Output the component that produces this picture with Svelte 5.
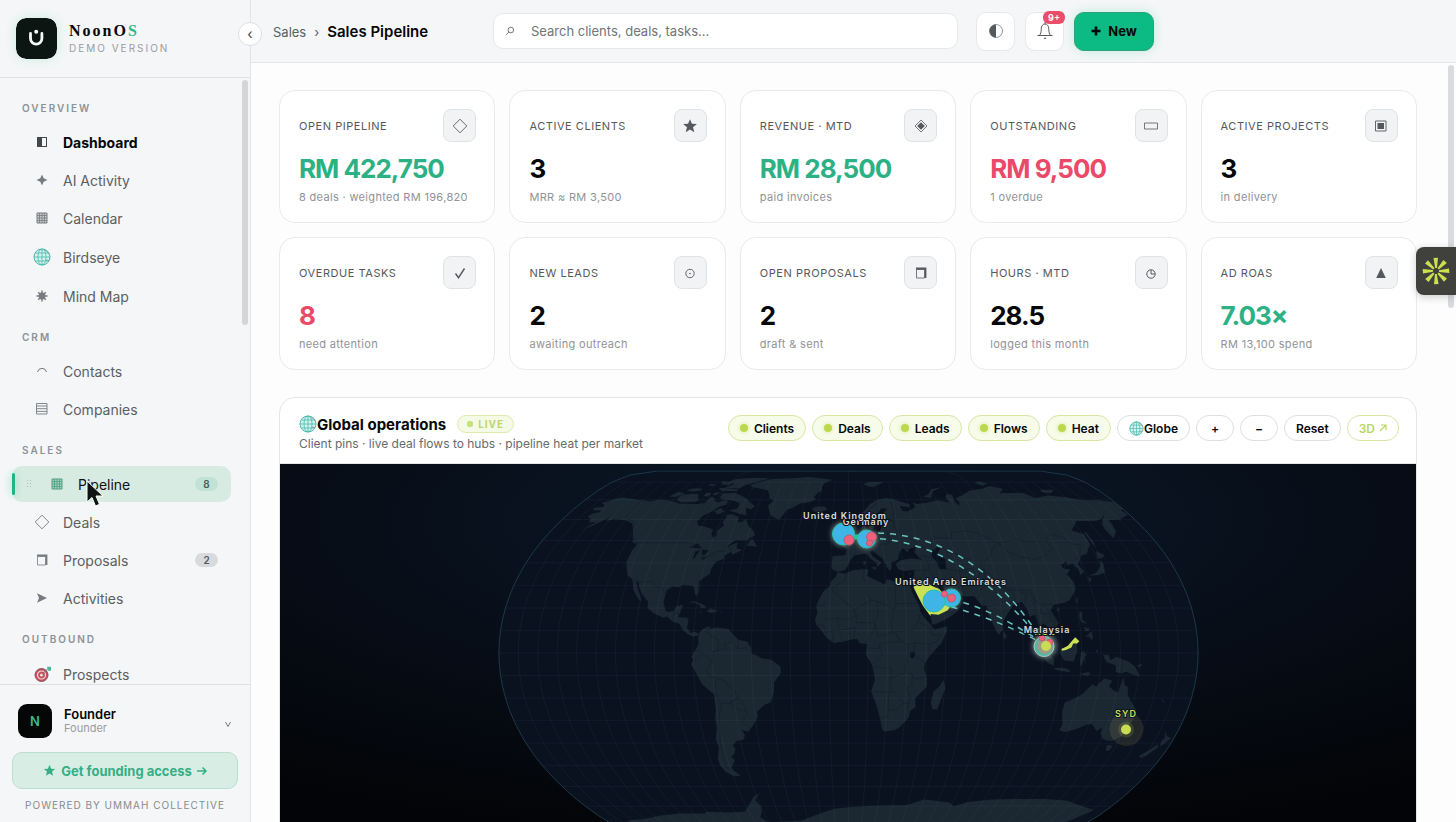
<script lang="ts">
  type Item = { label: string; icon: string; badge?: number; active?: boolean; strong?: boolean };
  type Point = [number, number];

  const nav: { title: string; items: Item[] }[] = [
    {
      title: 'Overview',
      items: [
        { label: 'Dashboard', icon: 'half', strong: true },
        { label: 'AI Activity', icon: 'spark' },
        { label: 'Calendar', icon: 'grid' },
        { label: 'Birdseye', icon: 'globe' },
        { label: 'Mind Map', icon: 'burst' }
      ]
    },
    {
      title: 'CRM',
      items: [
        { label: 'Contacts', icon: 'arc' },
        { label: 'Companies', icon: 'rows' }
      ]
    },
    {
      title: 'Sales',
      items: [
        { label: 'Pipeline', icon: 'grid', badge: 8, active: true },
        { label: 'Deals', icon: 'diamond' },
        { label: 'Proposals', icon: 'box', badge: 2 },
        { label: 'Activities', icon: 'arrow' }
      ]
    },
    { title: 'Outbound', items: [{ label: 'Prospects', icon: 'target' }] }
  ];

  const cards = [
    { label: 'Open pipeline', value: 'RM 422,750', note: '8 deals · weighted RM 196,820', icon: 'diamond', tone: 'good' },
    { label: 'Active clients', value: '3', note: 'MRR ≈ RM 3,500', icon: 'star', tone: '' },
    { label: 'Revenue · MTD', value: 'RM 28,500', note: 'paid invoices', icon: 'gem', tone: 'good' },
    { label: 'Outstanding', value: 'RM 9,500', note: '1 overdue', icon: 'bar', tone: 'bad' },
    { label: 'Active projects', value: '3', note: 'in delivery', icon: 'square', tone: '' },
    { label: 'Overdue tasks', value: '8', note: 'need attention', icon: 'check', tone: 'bad' },
    { label: 'New leads', value: '2', note: 'awaiting outreach', icon: 'dot', tone: '' },
    { label: 'Open proposals', value: '2', note: 'draft & sent', icon: 'box', tone: '' },
    { label: 'Hours · MTD', value: '28.5', note: 'logged this month', icon: 'clock', tone: '' },
    { label: 'Ad ROAS', value: '7.03×', note: 'RM 13,100 spend', icon: 'triangle', tone: 'good' }
  ];

  let layers = $state([
    { name: 'Clients', on: true },
    { name: 'Deals', on: true },
    { name: 'Leads', on: true },
    { name: 'Flows', on: true },
    { name: 'Heat', on: true }
  ]);
  let query = $state('');

  // Natural Earth projection, centred in the map's viewBox
  const SCALE = 127.8;
  const CX = 568.5;
  const CY = 189;

  function project(lon: number, lat: number): Point {
    const l = (lon * Math.PI) / 180;
    const p = (lat * Math.PI) / 180;
    const p2 = p * p;
    const p4 = p2 * p2;
    const x = l * (0.8707 - 0.131979 * p2 + p4 * (-0.013791 + p4 * (0.003971 * p2 - 0.001529 * p4)));
    const y = p * (1.007226 + p2 * (0.015085 + p4 * (-0.044475 + 0.028874 * p2 - 0.005916 * p4)));
    return [CX + x * SCALE, CY - y * SCALE];
  }

  // "lon,lat lon,lat ..." -> svg path
  function trace(shape: string, close = true) {
    const pts = shape.trim().split(/\s+/).map((s) => {
      const [lon, lat] = s.split(',').map(Number);
      return project(lon, lat).map((n) => n.toFixed(1)).join(' ');
    });
    return 'M' + pts.join('L') + (close ? 'Z' : '');
  }

  function meridian(lon: number, max: number) {
    const pts: string[] = [];
    for (let lat = -max; lat <= max; lat += 5) pts.push(`${lon},${lat}`);
    return pts.join(' ');
  }

  const graticule: string[] = [];
  for (let lon = -180; lon <= 180; lon += 10) graticule.push(trace(meridian(lon, lon % 90 ? 80 : 90), false));
  for (let lat = -80; lat <= 80; lat += 10) graticule.push(trace(`-180,${lat} 180,${lat}`, false));

  const sphere = trace(meridian(-180, 90) + ' ' + meridian(180, 90).split(' ').reverse().join(' '));

  const land = [
    // North America
    '-168,65.6 -162,66.5 -163.8,67.6 -166.5,68.4 -163,69.5 -156.8,71.3 -150,70.5 -141,69.7 -135,69.2 -128,70.2 -124,69.8 -118,69 -114,68 -108,67.9 -101,67.8 -97,68.3 -95.5,71.8 -92,71 -91.5,69.5 -88,68.5 -85,69.7 -82,69.5 -81.5,67.5 -86,66.3 -87.5,64.5 -93,62 -94.5,59 -92.5,57 -88,56.6 -82.3,55.2 -82,53 -80,51.2 -78.6,52.5 -79.5,54.6 -76.6,57.2 -78.5,58.8 -77.4,60.8 -78,62.4 -73.7,62.4 -69.6,61 -69.3,58.9 -66.5,58.8 -64.6,60.3 -61.5,57 -57.5,54.6 -55.8,52.5 -60,50.2 -66.5,50.2 -71,47 -65,49.2 -64.5,46.5 -61,45.8 -66,43.6 -67,44.8 -70.5,43.2 -70,41.8 -74,40.6 -76,37 -75.8,35.3 -81,31.8 -80.1,26.8 -80.6,25.2 -81.8,26.2 -82.8,29 -84.2,30 -89.5,30.2 -91,29.2 -94.5,29.5 -97.2,27.8 -97.6,22.5 -95.8,18.8 -94.3,18.2 -91.5,18.6 -90.4,20.8 -87,21.5 -88,18 -88.9,15.9 -84.5,15.8 -83.2,15 -83.6,11 -81.5,8.9 -79.5,9.5 -77.4,8.4 -78.3,7.5 -80.3,7.4 -83,8.3 -85.8,10.2 -87.6,12.9 -91.5,14 -94.5,16.2 -96.5,15.7 -101.8,17.7 -105.5,20 -105.6,22.5 -109.3,25.7 -112.2,28.9 -113.1,31.2 -114.7,31.7 -112.8,28.4 -111,26 -109.5,23.2 -110.3,23.3 -112.2,25 -115,28 -116,30.3 -117.2,32.6 -120.6,34.5 -122.5,37.5 -124.2,40.3 -124,46 -123,48.8 -127.5,51 -130.5,54.8 -134,58 -139.8,59.6 -144,60 -148,60.1 -151.5,59.3 -151.5,61 -154,59.3 -158,56.6 -163,54.8 -160,56 -157.5,58.7 -162,58.7 -162,60 -166,61.6 -164.5,63.1 -161,63.6 -161,64.5 -166,64.6',
    '-117,72.8 -106,73.2 -102,69.5 -105,68.7 -113.5,68.7 -116.5,69.5 -118,71',
    '-125,71.8 -121,74.3 -115.5,73.3 -120,71.5',
    '-89,73.5 -80.5,73.6 -76,72.5 -71,71 -67,69 -62,66.6 -64,65 -67.5,66 -66,63.2 -65,62 -71,63 -78,64.5 -73,65.5 -73,68 -79,69.8 -85,70 -89,71',
    '-90,76.4 -80,76.2 -77,78 -70,80 -62,82.4 -75,83 -88,82 -91,80 -86,79',
    '-95,76.6 -88,76.3 -80,75.6 -80,74.7 -91,74.7',
    '-117,75.3 -112,76.3 -106,76 -106,75 -112,74.5',
    '-97,80.5 -88,80 -89,78.3 -95,78.5',
    '-101,73.6 -97,73.8 -97,71.6 -101,72',
    '-95,74 -90.5,73.9 -93,72.3 -95.5,72.8',
    '-104,79 -99,78.5 -99,77.8 -104,78',
    '-87,64 -84,65.8 -80.5,64 -83.5,62.5',
    '-59.3,47.8 -57,51 -55.5,49.8 -52.9,47.2',
    '-128,50.6 -125,50 -123.5,48.4 -126,49.3',
    '-84.8,21.9 -82,23.1 -77,21.8 -74.3,20.2 -77.5,19.9 -78.5,21.4 -82,22.5',
    '-74.3,18.4 -72.5,19.9 -68.4,18.6 -71.5,17.8',
    '-78.3,18.4 -76.3,18.1 -77.5,17.8',
    '-67.2,18.5 -65.6,18.3 -67,18',
    // Greenland, Iceland
    '-73,78.2 -66,80.5 -60,82 -45,82.6 -32,83.5 -20,82.5 -12.5,81.5 -18,79.5 -19.5,77 -19,75 -22,73.5 -24,71.5 -22.3,70.3 -27,68.5 -32.5,68 -37,65.8 -40,64.9 -42.5,61.5 -43.5,60 -46.5,60.8 -49.5,62 -51.8,64.5 -53.5,67 -51,69.7 -54.5,70.6 -55.5,72.8 -58.5,75.4 -65,76.1 -71,77',
    '-24,65.5 -22,66.4 -16,66.5 -13.7,65 -18.7,63.4 -22.7,63.9',
    // South America
    '-77.4,8.6 -75.5,10.7 -72,12 -71.5,10.8 -68,11.4 -62,10.7 -60,8.6 -57,6 -52,5 -50,1.8 -50,-0.5 -48,-0.8 -44.5,-2.5 -40,-2.9 -37,-4.8 -35,-6 -35,-9 -38.5,-13 -39,-17.8 -41,-22 -44.5,-23 -48.5,-26 -48.7,-28.5 -52,-32.5 -54.9,-34.9 -58,-34.2 -57,-36.5 -58,-38.3 -62.2,-39 -65,-41 -63.8,-42.7 -65.5,-45 -67.5,-46 -65.8,-47.5 -69,-51 -68.3,-52.5 -65.2,-54.8 -69,-55.2 -73.5,-53 -75.5,-50 -75.5,-47 -73,-42 -73.5,-38 -71.5,-33 -71.5,-29 -70.3,-25 -70.2,-18.5 -76,-14 -79.5,-7.5 -81.2,-5 -80,-3 -80.8,-1.5 -78.8,1.5 -77.3,4 -77.6,7',
    // Africa
    '-6,35.8 -2,35.1 3,36.8 9.8,37.3 11,36.8 10.2,34.2 15,32.3 19.5,30.4 21,32.8 25,31.7 29,30.9 32.3,31.2 34,28 33.5,27.8 35.5,24 37.2,21 37.5,18.7 39.5,15.5 43,12.3 43.3,11.5 44.5,10.5 51.2,11.9 50.8,9.5 48,4.5 42,-1 39.5,-4.5 39,-7 40.6,-11 40.7,-15 35,-20 35.5,-24 32.7,-25.9 32.3,-28.5 28,-32.8 25.6,-34 20,-34.8 18.4,-34 17,-29.5 14.5,-22.5 11.8,-17 13.7,-12 13,-8.5 12,-5 9,-1 9.5,4 6,4.3 4.3,6.3 1,5.9 -3,5 -7.6,4.4 -11.5,6.9 -13.3,9.2 -16.7,12.4 -17.4,14.7 -16.3,18 -17,21 -15,25 -13,27.8 -9.8,29.7 -9.8,31.5 -6.8,34',
    '49.3,-12 50.4,-15.6 47.1,-25 44.5,-25 43.4,-22 44.4,-17 47,-15.2',
    // Eurasia
    '-9,43 -1.8,43.4 -1.2,46 -4.6,48.4 -1.5,48.6 1.6,50.8 4.5,52.5 8,53.8 8.3,57 10.6,57.7 10.3,54.5 14,54 19,54.5 21,57.3 24,57.3 23.5,59.3 30,59.9 23,60 21.3,61 22,63 25.4,65.1 22,65.8 17.3,61.8 18.8,60 16.5,57 14.3,55.5 12.7,56 11,59 8,58.1 5.2,59.5 5,62 10,64 14,67.5 19,69.8 25.8,71 31,70.3 41,67.5 40,66.2 34,66.7 35,64.3 38,64 44,66 43.5,68.5 46,67.8 54,68.5 60.5,69.7 68,68.5 67,71.3 69,73 72.7,72.8 72,69 73.5,67 75,68.5 74,71 80,72.5 87,75 98,76.2 104.3,77.6 112,76 107,73.5 113.5,73.7 124,73.7 129,71 139,72.3 150,71.5 160,69.8 170,69.8 180,68.9 180,65 177.5,64.7 179.3,62.5 170.5,60 163.3,59.8 163,57.8 162,56 162,54.8 156.8,51 155.8,55 156.8,57.8 163.6,62.4 160,60.6 155,59.3 142.5,59.2 135.3,54.8 141,53 140.5,48.5 135.5,44 131.8,43.2 129.7,41 127.6,39.5 129.4,36 126.5,34.5 126.8,37 125,39.5 121.3,39 122,40.6 118,39 119,37.3 122.4,37 119.2,35 121.8,31.5 121.6,28.2 117,23.5 113.7,22.2 108.3,21.6 105.9,19 109.2,13.3 106.7,10.4 104.8,8.7 105,10.2 102.5,12.2 100.9,13.4 99.4,10 100.5,7.2 103.4,4.5 104.2,1.4 101.3,2.9 98.3,7.9 98.5,13 97.2,17 94.3,16 93.5,19.8 91.3,22.8 87,21.5 82.3,16.6 80.2,13.5 79.8,10.3 77.6,8.1 76.5,9.5 73,17 72.7,21 70.4,20.9 69,22.4 66.7,25.2 61.6,25.1 57,26.9 54.7,26.5 51.5,27.9 50.1,30.1 48,30 48.8,27.7 50.2,26 51.5,24.3 54,24.1 56.2,26.3 56.6,24.2 59.8,22.4 57.7,19 55.2,17.3 52,15.6 45,12.8 43.3,12.8 42.8,16.3 39.1,21 35,28 34.9,29.5 34.3,31.3 36,35 36.2,36.8 30.6,36.4 27.5,37 26.3,39.4 29,41 35,42 41.4,41.4 37.5,44.6 39,47.2 35,46.3 33.5,44.5 32,46.3 30.7,46.3 28.5,43.7 28,41.6 26,40.7 23.8,40.3 24,37.8 22.8,36.5 21.3,37.8 19.4,41.8 15,44.5 13.6,45.5 12.4,44.9 14,42.6 18.5,40.2 16,38 15.6,40 12.3,41.8 10.2,43.9 7.5,43.8 3.2,43.2 0.5,40.5 -0.5,38.4 -2,36.8 -5.6,36 -9,37 -9.5,38.8',
    '-5.7,50.1 1.4,51.2 1.7,52.7 0,53.6 -2,55.8 -2,57.6 -5,58.6 -6,56.5 -4.8,54.7 -3,53.8 -4.6,53 -5.2,51.8 -3,51.4',
    '-10,51.7 -6.4,52.2 -6,54 -7.5,55.3 -10,54.2',
    '11,79 16,80 27,80 18,77 14,77.5',
    '51.5,71.5 56,73 60,75.8 68.5,77 60,74.5 57,71',
    '95,79.5 100,80.5 105,79 99,78',
    '138,75.5 148,75.3 143,73.5 138,74',
    '12.5,38 15.3,38.2 15,36.7',
    '8.3,40.8 9.7,40.8 9.3,39 8.4,39',
    '32.5,35 34.5,35.5 33.5,34.6',
    '79.8,8 80.2,9.7 81.8,7.3 80.5,6',
    '142,54.3 143,53.5 143.5,49.5 142.6,46.5 142,49',
    '140,42 141.7,45.3 145.2,43.5 143,42',
    '141.5,41.2 142,39.5 140.8,35.8 137,34.6 133,34.3 130.9,34.2 135.8,35.6 139.5,38.3',
    '130,33.6 132,33.3 130.7,31.2',
    '120.2,23.2 121.6,25.2 120.9,22',
    '108.8,19.3 110.8,20 110,18.4',
    '120.3,16 120.8,18.5 122.2,18.3 121.6,15 124,12.8 120.8,13.8',
    '122,7.2 125.6,9.6 126.3,7.2 125.4,5.8 124,7.3',
    '122,11.8 123.5,11 124.8,11.3 124.5,10 122.6,9.5',
    '95.4,5.6 98,4.6 103,0.5 106,-3 105.7,-5.8 102,-4 98.7,1.7',
    '105.3,-6.8 108.5,-6.6 112.6,-6.9 114.4,-7.8 114,-8.6 108,-7.7',
    '109,1.5 111.3,2.4 113,3.2 115.5,5.5 117,7 119,5.2 117.8,4.2 117.8,1 116,-3.8 111,-3.3 109.2,-0.5',
    '119.2,-3.4 120,0.6 124.8,1.4 120.8,0.5 122.9,-0.8 121.5,-1.8 122.5,-4.7 121,-2.8 120.4,-5.5 119.5,-5.5',
    '127.5,0 128,2 128.6,0.5',
    '131,-0.8 134,-0.9 135,-3.2 138,-1.7 144.5,-3.9 147.8,-6 150.7,-10.3 147,-9.5 143.5,-8.3 141,-9.1 138,-8.4 138,-5.5 133,-4 132,-2.8',
    '148.5,-5.7 151.5,-4.8 152,-4.5 150.3,-6.3',
    '119,-9.4 124,-8.4 125,-9.2 123.8,-10.2',
    '164.2,-20.2 167,-22.2 165.5,-21.8',
    // Australia, New Zealand
    '114,-22 113.6,-26 115.7,-31.7 115,-34.2 118,-35 123.5,-33.9 129,-31.7 131.5,-31.5 135.5,-34.6 137.8,-33 138.2,-35.6 140.5,-38 143.5,-38.8 146.4,-39 150,-37.3 151.3,-33.5 153.5,-28.5 152.8,-25.3 149.5,-22.3 146.2,-18.8 145.3,-15 143.5,-14.2 142.5,-10.8 141.5,-13.5 140.8,-17.5 138.5,-16.8 135.5,-14.8 136.8,-12.2 132.5,-11.3 130,-13.5 129,-14.9 126.8,-13.9 123.6,-17 122.2,-18.2 119,-20',
    '144.8,-40.8 148.2,-40.9 147.8,-43.2 146,-43.5',
    '172.8,-34.5 175.3,-36.8 178.4,-37.8 176.8,-39.8 175.2,-41.6 174,-39.3 174.7,-37.5',
    '172.8,-40.6 174.2,-41.7 170.8,-45.5 168.5,-46.6 166.6,-45.8 170,-43.2',
    // Antarctica
    '-165,-78 -150,-77 -135,-75 -120,-74 -102,-74 -100,-73 -85,-73.3 -73,-73 -67,-68.8 -62,-65 -57,-63.3 -60,-65 -62,-67 -60,-70 -61,-73 -64,-76 -60,-79 -35,-78 -28,-76 -20,-74 -10,-71.3 0,-70.5 15,-69.8 30,-69.5 40,-69.3 50,-66.5 57,-67 68,-68 72,-70 80,-67.8 95,-66.5 110,-66.3 130,-66.2 145,-67 160,-70 171,-72 165,-78 165,-89 -165,-89'
  ].map((s) => trace(s));

  const water = [
    '47,43 48,45.5 51,47 53,46.5 51,44.5 54.5,41.5 53.8,37 50,37.4 49.3,40.5',
    '-92,46.8 -88,48.8 -84.5,46.5 -88,46.6',
    '-87.7,42 -87.5,45 -85,45.8 -86.5,43 -86.8,41.7',
    '-84,46 -80,45.5 -82,43.2 -83.5,44',
    '-83.3,41.8 -79,42.9 -81.5,41.5',
    '32,0.5 34.5,0.3 33.5,-2.5 31.8,-2'
  ].map((s) => trace(s));

  const borders = [
    '-123,49 -95,49 -89,48 -84.5,46.5 -82.5,45 -82.5,42 -79,43 -75,45 -71,45.2 -69,47.3 -67,45',
    '-117,32.6 -111,31.3 -106.5,31.8 -103,29 -101,29.7 -97.2,26',
    '-141,69.7 -141,60.3 -135,59.5 -130.5,55.5',
    '-92,14.6 -91,17.8 -89,17.8 -88.4,16',
    '-72,12 -73,9.2 -70,7 -67.5,6.2 -67,1.2 -70,0.5 -70,-4.2 -73.5,-7.2 -72.5,-9.5 -69.5,-11 -65,-12 -60,-16.2 -58,-20 -54.5,-24 -54,-27 -57.5,-30.2 -53.5,-33.5',
    '-60,8 -60,5 -64,4 -63,2.2 -67,1.2',
    '-60,5 -57,2 -52.5,2.3 -51.5,4',
    '-57,6 -57,2',
    '-79,1.4 -75,0 -70,-4.2',
    '-75,0 -80,-4.3',
    '-70.2,-18.4 -69,-16 -69,-12',
    '-69.5,-18 -67,-23 -69.5,-29 -70,-34 -71.5,-40 -72,-46 -72.5,-51 -68.4,-52.3',
    '-67,-22.5 -62.5,-22.2 -58,-20 -62.5,-22.2 -57.6,-25.5 -54.5,-25.5',
    '-8.7,27.7 -8.7,29 -2,32.2 -1.5,35',
    '-8.7,27.7 -5,25 3,19.2 12,23.5 9.5,26.5 10,30.5 8,33 8.5,36.8',
    '12,23.5 15,23 24,19.5 25,22 25,31.5',
    '25,22 36.5,22',
    '-12,15 -5.5,15.5 0,15 4,16.5 3,19.2',
    '-12,23 -13,21.3 -17,21',
    '4,16.5 4,13.5 13.5,13.5 15.5,17 15,23',
    '24,19.5 22,13 23,9 15,7.5 14,13',
    '2.5,6.3 3.5,11.5 -5,10 -3,5.2',
    '1,6 0,11',
    '-8,4.8 -8,10 -12,9 -13,12.5 -16.5,12.5',
    '-8,10 -5,10 -5.5,15.5',
    '8.7,4.6 13.5,10.5 14,13',
    '9.7,2.2 16,2 16,4 23,5 27.5,5 31,3.7 30,-4.5 29,-9 22,-11 22,-7 13,-6',
    '16,2 17.5,-1 12.5,-5',
    '23,9 27.5,5 24,9.5 33,10 36,14 37.5,17.5',
    '31,3.7 34,4.5 36,4.5 42,3.9 41.5,-1.5',
    '34,4.5 34,-1 37.7,-3.5 39.2,-4.6',
    '36,14 42.5,11 43,8 48,8 45,5 42,3.9',
    '30,-8.5 33,-9.5 35,-11.5 40.5,-10.5',
    '22,-11 22,-16 24,-17.5 11.8,-17.2',
    '21,-18 21,-28 20,-28.5 17,-28.7',
    '21,-25 25.5,-25.5 29,-22.2 31.3,-22.4 32,-26',
    '24,-17.8 29,-22',
    '33,-9.5 33,-14 30.5,-15.5 32.5,-20 31.3,-22.4',
    '28.5,69 29.5,64 28,60.5',
    '12,60 12,64 20,69',
    '14.5,54 15,51 12.5,50 13,48 7.5,47.6 6.5,50 7,53',
    '23.5,54 23.5,51 24,48.5 17,48.5',
    '28,59.5 28,56 31,53 34,51.5 40,49.5 38.5,47.2',
    '48,42 45,42.5 40,43.5',
    '44,41 44.5,38 44.5,37 36,36.5',
    '44.5,37 46,33 48,30.5',
    '39,32 42,37',
    '53.8,37.2 61,36.5 61,30 61.5,25.2',
    '61,30 66.5,30 70,33.5 74.5,37 66,37.5 61,36',
    '50,46 47,49 51,51.5 61,51 62,54 71,54.5 77,53.5 83,51 87,49 82,45.5 80,42.5 74,40 73.5,37.5',
    '87,49 98,50.5 107,49.5 116,50 120,53 126,52 131,48 135,48.5 131,43',
    '87,49 91,45 97,42.7 105,41.6 112,43.5 117,46.5 116,50',
    '56,41 56,45 61,44 66,41.8 69,41.5',
    '74.5,37 79,32.5 81,30 88,28 97,28 98,24 101,21.5 108,21.6',
    '69,24 71,28 74.5,31 74.5,37',
    '81,30 88,26.5 88,22',
    '92,27 95,26.5 92.5,21.5',
    '98,24 97.8,18 99,10.5',
    '100.5,20 101,17.5 104.5,17.5 105.5,14.5 102.5,13.5',
    '102,22.5 104.5,19 107.5,15 106.5,11',
    '124.5,40 128,41.8 130.5,42.5',
    '141,-2.6 141,-9.1'
  ].map((s) => trace(s, false));

  const markets = [
    '34.9,29.3 39,32 42,31 46.5,29 48.4,28.5 50.1,26.7 51,24.5 55,22.5 52,19 47,17 43,17.3 42.7,16.5 39.1,21 37,25',
    '51.6,24.2 54,24.1 56,26 55.3,22.7 52.5,22.9',
    '100.3,6.5 102,6.2 103.4,4.5 104.2,1.4 101.3,2.9',
    '109.6,1.8 111.3,2.4 113,3.2 115.2,5.3 117,7 119,5.2 117.8,4.2 115.8,4.2 114.8,2.5 112,1.4 110,1'
  ].map((s) => trace(s));

  const flows = [
    'M586 69Q694 66 764 180',
    'M588 74Q682 76 764 180',
    'M660 133Q706 140 764 180',
    'M660 140Q710 152 764 180'
  ];
</script>

{#snippet globe()}
  <svg class="globe" viewBox="0 0 18 18" aria-hidden="true">
    <circle cx="9" cy="9" r="8" fill="#d5f3ec" stroke="#45b9ad" />
    <path d="M9 1v16M1 9h16M2.5 5h13M2.5 13h13" stroke="#45b9ad" fill="none" stroke-width=".8" />
    <ellipse cx="9" cy="9" rx="4" ry="8" fill="none" stroke="#45b9ad" stroke-width=".8" />
    <path d="M12 2.5c2 .5 3.500 2 4.300 4M13 12l3 .5" stroke="#8d9ba0" fill="none" />
  </svg>
{/snippet}

{#snippet icon(name: string)}
  {#if name === 'globe'}
    {@render globe()}
  {:else}
    <svg class="icon" viewBox="0 0 18 18" fill="none" stroke="currentColor" aria-hidden="true">
      {#if name === 'half'}
        <rect x="4.500" y="4.500" width="9" height="9" /><path d="M4 4h5v10H4z" fill="currentColor" stroke="none" />
      {:else if name === 'spark'}
        <path d="M9 3.500L10.700 7.300 14.500 9 10.700 10.700 9 14.500 7.300 10.700 3.500 9 7.300 7.300z" fill="currentColor" stroke="none" />
      {:else if name === 'grid'}
        <path d="M4 4h10v10H4z" fill="currentColor" fill-opacity=".35" />
        <path d="M6.500 4v10M9 4v10M11.500 4v10M4 6.500h10M4 9h10M4 11.500h10" stroke-width=".8" />
      {:else if name === 'burst'}
        <path d="M9 3.500v11M3.500 9h11M5.200 5.200l7.600 7.600M12.800 5.200l-7.600 7.600" stroke-width="1.500" />
        <circle cx="9" cy="9" r="3.400" fill="currentColor" stroke="none" />
      {:else if name === 'arc'}
        <path d="M4.500 10a4.600 4.600 0 0 1 9 0" />
      {:else if name === 'rows'}
        <path d="M3.500 3.500h10.500v10.500H3.500zM3.500 6h10.500M3.500 8.700h10.500M3.500 11.400h10.500" stroke-width=".9" />
      {:else if name === 'diamond'}
        <path d="M9 2.200L15.800 9 9 15.800 2.200 9z" stroke-width=".9" />
      {:else if name === 'box'}
        <path d="M4.500 5.500h8v8.500h-8z" stroke-width=".8" /><path d="M4 4.500h9.500V14" stroke-width="1.800" />
      {:else if name === 'arrow'}
        <path d="M4 4.200L14 9 4 13.800 6 9z" fill="currentColor" stroke="none" />
      {:else if name === 'target'}
        <circle cx="8.500" cy="10" r="6.500" fill="#c94b5c" stroke="#7b5c60" />
        <circle cx="8.500" cy="10" r="4" stroke="#f2dfe1" stroke-width="1.200" />
        <circle cx="8.500" cy="10" r="1.500" fill="#f7e8ea" stroke="none" />
        <path d="M9 9.500l6-6" stroke="#657b78" /><path d="M14 1.800h4v4h-3z" fill="#48b896" stroke="none" />
      {:else if name === 'star'}
        <path d="M9 2.200l1.900 4.600 5 .3-3.900 3.200 1.300 4.900L9 12.500 4.700 15.200 6 10.300 2.100 7.100l5-.3z" fill="currentColor" stroke="none" />
      {:else if name === 'gem'}
        <path d="M9 3l6 6-6 6-6-6z" stroke-width=".8" /><path d="M9 5.200L12.800 9 9 12.800 5.200 9z" fill="currentColor" stroke="none" />
      {:else if name === 'bar'}
        <path d="M2.500 6h13v6h-13z" stroke-width=".8" />
      {:else if name === 'square'}
        <path d="M3.500 4h10.500v10H3.500z" stroke-width=".9" /><path d="M5.500 6h6.500v6H5.500z" fill="currentColor" stroke="none" />
      {:else if name === 'check'}
        <path d="M4.500 9.500l3 4.200L13.500 4.500" stroke-width="1.400" />
      {:else if name === 'dot'}
        <circle cx="9" cy="9.500" r="4.200" stroke-width=".9" /><circle cx="9" cy="9.500" r=".8" fill="currentColor" stroke="none" />
      {:else if name === 'clock'}
        <circle cx="9" cy="10" r="4.200" /><path d="M9 6v4h4" />
      {:else if name === 'triangle'}
        <path d="M9 4l4.800 10H4.200z" fill="currentColor" stroke="none" />
      {/if}
    </svg>
  {/if}
{/snippet}

<div class="app">
  <aside class="sidebar">
    <div class="brand">
      <svg class="logo" viewBox="0 0 41 41" aria-hidden="true">
        <rect width="41" height="41" rx="10" fill="#0b1512" />
        <path d="M14.500 15.500v5a5.700 5.700 0 0 0 11.400 0v-5" fill="none" stroke="#f4faf7" stroke-width="2.800" stroke-linecap="round" />
        <circle cx="20.200" cy="13.700" r="2" fill="#f4faf7" />
      </svg>
      <div>
        <div class="brand-name">NoonO<span>S</span></div>
        <div class="brand-sub">DEMO VERSION</div>
      </div>
    </div>
    <button class="collapse" aria-label="Collapse sidebar">‹</button>

    <nav>
      {#each nav as group}
        <h2>{group.title}</h2>
        {#each group.items as item}
          <a
            href="#{item.label}"
            class="item"
            class:active={item.active}
            class:strong={item.strong}
            class:tall={item.icon === 'globe' || item.icon === 'target'}
          >
            {#if item.active}
              <svg class="grip" viewBox="0 0 12 8" aria-hidden="true">
                <path d="M3.500 0v8M6.500 0v8" stroke="#a9bfb6" stroke-dasharray="1 2" />
              </svg>
            {/if}
            {@render icon(item.icon)}
            <span class="item-label">{item.label}</span>
            {#if item.badge}<span class="badge">{item.badge}</span>{/if}
            {#if item.active}
              <svg class="pointer" viewBox="0 0 18 28" aria-hidden="true">
                <path d="M1 1v21l5-4.500 3.500 8.500 4-1.700-3.500-8.300h7z" fill="#0d1412" stroke="#fff" stroke-width="1" />
              </svg>
            {/if}
          </a>
        {/each}
      {/each}
      <div class="thumb"></div>
    </nav>

    <footer>
      <button class="user">
        <span class="avatar">N</span>
        <span class="who"><strong>Founder</strong><small>Founder</small></span>
        <svg class="chevron" viewBox="0 0 8 8" aria-hidden="true"><path d="M1.500 2L4 6.500 6.500 2" fill="none" stroke="currentColor" /></svg>
      </button>
      <button class="cta">
        {@render icon('star')}
        Get founding access
        <svg class="cta-arrow" viewBox="0 0 12 12" aria-hidden="true"><path d="M1 6h9M6.500 2.500L10 6l-3.500 3.500" fill="none" stroke="currentColor" stroke-width="1.500" /></svg>
      </button>
      <p class="powered">POWERED BY UMMAH COLLECTIVE</p>
    </footer>
  </aside>

  <div class="page">
    <header class="topbar">
      <div class="crumbs"><a href="#sales">Sales</a><span>›</span><strong>Sales Pipeline</strong></div>
      <label class="search">
        <svg viewBox="0 0 10 10" aria-hidden="true"><circle cx="5.800" cy="4" r="2.800" fill="none" stroke="currentColor" /><path d="M3.800 6L1.200 8.800" stroke="currentColor" /></svg>
        <input type="text" placeholder="Search clients, deals, tasks..." aria-label="Search" bind:value={query} />
      </label>
      <div class="actions">
        <button class="square" aria-label="Toggle theme">
          <svg viewBox="0 0 18 18"><circle cx="9" cy="9" r="6.500" fill="none" stroke="#777b80" stroke-width=".8" /><path d="M9 2.500a6.500 6.500 0 0 0 0 13z" fill="#55585c" /></svg>
        </button>
        <button class="square" aria-label="Notifications">
          <svg viewBox="0 0 18 18"><path d="M1.500 13.500h15M3.300 13.500c1.500-1.500 1.900-3.500 1.900-6C5.200 4 6.700 2 9 2s3.800 2 3.800 5.500c0 2.500.4 4.500 1.900 6M7.800 16.300h2.400M9 .5V2" fill="none" stroke="#55585c" /></svg>
          <span class="count">9+</span>
        </button>
        <button class="new">
          <svg viewBox="0 0 10 10" aria-hidden="true"><path d="M5 .5v9M.5 5h9" stroke="currentColor" stroke-width="2.600" /></svg>
          New
        </button>
      </div>
    </header>

    <main>
      <section class="cards">
        {#each cards as card}
          <article class="card">
            <div class="card-top">
              <h3>{card.label}</h3>
              <span class="tile">{@render icon(card.icon)}</span>
            </div>
            <div class="value {card.tone}">{card.value}</div>
            <p>{card.note}</p>
          </article>
        {/each}
      </section>

      <section class="panel">
        <div class="panel-head">
          <div class="panel-text">
            <div class="panel-title">{@render globe()}<h2>Global operations</h2><span class="live"><i></i>LIVE</span></div>
            <p>Client pins · live deal flows to hubs · pipeline heat per market</p>
          </div>
          <div class="pills">
            {#each layers as layer}
              <button class="pill layer" class:on={layer.on} aria-pressed={layer.on} onclick={() => (layer.on = !layer.on)}>
                <i></i>{layer.name}
              </button>
            {/each}
            <button class="pill">{@render globe()}Globe</button>
            <button class="pill">+</button>
            <button class="pill">−</button>
            <button class="pill">Reset</button>
            <button class="pill lime">3D
              <svg viewBox="0 0 8 8" aria-hidden="true"><path d="M1 7l6-6M2 1h5v5" fill="none" stroke="currentColor" stroke-width="1.200" /></svg>
            </button>
          </div>
        </div>

        <svg class="map" viewBox="0 0 1136 378" role="img" aria-label="World map of markets">
          <defs>
            <radialGradient id="sky" cx="50%" cy="15%" r="85%">
              <stop offset="0" stop-color="#0b1a29" />
              <stop offset=".55" stop-color="#070d17" />
              <stop offset="1" stop-color="#030407" />
            </radialGradient>
            <filter id="glow" x="-100%" y="-100%" width="300%" height="300%"><feGaussianBlur stdDeviation="2.500" /></filter>
          </defs>
          <rect width="1136" height="378" fill="url(#sky)" />
          <path d={sphere} class="sphere" />
          {#each land as d}<path {d} class="land" />{/each}
          {#each water as d}<path {d} class="water" />{/each}
          {#each borders as d}<path {d} class="border" />{/each}
          {#each graticule as d}<path {d} class="graticule" />{/each}
          {#each markets as d}<path {d} class="market" />{/each}
          {#each flows as d}<path {d} class="flow" />{/each}

          <g class="halo" filter="url(#glow)">
            <circle cx="563.500" cy="70" r="12" /><circle cx="587" cy="75" r="10" />
            <circle cx="671" cy="134" r="9" /><circle cx="764.500" cy="182" r="12" />
          </g>
          <path d="M574 73h8" stroke="#20c592" stroke-width="5" />
          <circle class="client" cx="563.500" cy="70" r="11" />
          <circle class="client" cx="586.500" cy="75" r="9" />
          <circle class="client" cx="671.500" cy="134" r="9" />
          <circle class="client" cx="654" cy="137" r="11" />
          <circle class="deal" cx="569" cy="76" r="5" />
          <circle class="deal" cx="591.500" cy="73" r="5" />
          <circle class="deal" cx="589.500" cy="79" r="3" />
          <circle class="deal" cx="664.500" cy="130" r="3" />
          <circle class="deal" cx="671.500" cy="134" r="4" />
          <circle cx="764" cy="182.500" r="10" fill="#52b6a8" stroke="#a9c9bd" />
          <circle cx="765" cy="182" r="8" fill="#9a9c86" />
          <circle class="deal" cx="762" cy="174" r="3" />
          <circle class="deal" cx="770" cy="178" r="3" />
          <circle cx="766" cy="182" r="5" fill="#c9dc55" />
          <circle cx="846.500" cy="265" r="17" fill="#c9b06a" fill-opacity=".13" />
          <circle cx="846" cy="265.500" r="8" fill="#c9dc55" fill-opacity=".15" />
          <circle cx="846" cy="265.500" r="5" fill="#c9dc55" />

          <g class="names">
            <text x="586" y="61">Germany</text>
            <text x="565" y="55">United Kingdom</text>
            <text x="671" y="121">United Arab Emirates</text>
            <text class="hub" x="765" y="171">KUL</text>
            <text x="767" y="169">Malaysia</text>
            <text class="hub" x="846" y="253">SYD</text>
          </g>
        </svg>
      </section>
    </main>
    <div class="page-thumb"></div>
  </div>

  <button class="widget" aria-label="Open assistant">
    <svg viewBox="0 0 28 28">
      {#each [0, 45, 90, 135, 180, 225, 270, 315] as angle}
        <path d="M11.500 1l4.500-.3-1 10.300h-1.800z" fill="#cbe04f" transform="rotate({angle} 14 14)" />
      {/each}
    </svg>
  </button>
</div>

<style>
  :global(body) {
    margin: 0;
    font-family: Inter, 'Liberation Sans', sans-serif;
    color: #060708;
    background: #fdfdfe;
  }

  * {
    box-sizing: border-box;
  }

  button {
    font: inherit;
    color: inherit;
    padding: 0;
    cursor: pointer;
  }

  h2,
  h3,
  p {
    margin: 0;
  }

  a {
    color: inherit;
    text-decoration: none;
  }

  .app {
    display: flex;
    height: 100vh;
    overflow: hidden;
    position: relative;
  }

  .sidebar {
    position: relative;
    z-index: 2;
    width: 251px;
    flex: none;
    display: flex;
    flex-direction: column;
    background: #f5f6f8;
    border-right: 1px solid #e2e4e7;
  }

  .brand {
    display: flex;
    align-items: center;
    gap: 12px;
    height: 78px;
    flex: none;
    padding: 0 16px;
    border-bottom: 1px solid #dfe1e4;
  }

  .logo {
    width: 41px;
    height: 41px;
    border-radius: 10px;
    box-shadow: 0 0 12px #c8eedd;
  }

  .brand-name {
    font: bold 16px/18px 'Liberation Serif', serif;
    letter-spacing: 2px;
  }

  .brand-name span {
    color: #2fb98a;
  }

  .brand-sub {
    font-size: 10px;
    line-height: 16px;
    letter-spacing: 2px;
    color: #999ca0;
  }

  .collapse {
    position: absolute;
    top: 22px;
    right: -12px;
    width: 24px;
    height: 24px;
    border: 1px solid #dcdee1;
    border-radius: 50%;
    background: #fff;
    font-size: 14px;
    line-height: 20px;
    color: #444;
  }

  nav {
    position: relative;
    flex: 1;
    min-height: 0;
    overflow: hidden;
    padding: 9px 19px 0 12px;
  }

  nav h2 {
    margin: 17px 10px 10px;
    font-size: 10px;
    line-height: 12px;
    font-weight: 600;
    letter-spacing: 2px;
    text-transform: uppercase;
    color: #8e9195;
  }

  nav h2:first-child {
    margin-top: 15px;
  }

  .item {
    position: relative;
    display: flex;
    align-items: center;
    gap: 12px;
    height: 36px;
    margin-bottom: 2px;
    padding: 0 13px 0 21px;
    border-radius: 10px;
    font-size: 14px;
    color: #5b5e62;
  }

  .item.tall {
    height: 38px;
  }

  .item.strong {
    font-weight: 700;
    color: #060708;
  }

  .item.active {
    padding-left: 12px;
    background: #d8ebe3;
    color: #111;
  }

  .item.active::before {
    content: '';
    position: absolute;
    left: 0;
    top: 7px;
    bottom: 7px;
    width: 3px;
    border-radius: 2px;
    background: #1db583;
    box-shadow: 0 0 8px #7ed6b6;
  }

  .item .icon {
    color: #777a7e;
  }

  .item.active .icon {
    color: #4f9f84;
  }

  .item.strong .icon {
    color: #444749;
  }

  .icon,
  .globe {
    width: 18px;
    height: 18px;
    flex: none;
  }

  .grip {
    width: 12px;
    height: 8px;
    flex: none;
  }

  .item-label {
    flex: 1;
  }

  .badge {
    min-width: 23px;
    padding: 0 6px;
    border-radius: 7px;
    background: #d8dadc;
    font-size: 10px;
    line-height: 14px;
    font-weight: 600;
    text-align: center;
    color: #55585c;
  }

  .active .badge {
    background: #bfe3d5;
  }

  .pointer {
    position: absolute;
    left: 74px;
    top: 14px;
    width: 18px;
    height: 28px;
  }

  .thumb {
    position: absolute;
    right: 2px;
    top: 2px;
    width: 6px;
    height: 245px;
    border-radius: 3px;
    background: #d3d5d7;
  }

  footer {
    flex: none;
    padding: 19px 12px 10px;
    border-top: 1px solid #dfe1e4;
  }

  .user {
    display: flex;
    align-items: center;
    gap: 12px;
    width: 100%;
    padding: 0 6px;
    border: 0;
    background: none;
    text-align: left;
  }

  .avatar {
    width: 34px;
    height: 34px;
    border-radius: 9px;
    background: #040706;
    color: #3cb88e;
    font-size: 13px;
    line-height: 34px;
    font-weight: 600;
    text-align: center;
  }

  .who {
    flex: 1;
  }

  .who strong,
  .who small {
    display: block;
    font-size: 13px;
    line-height: 15px;
    font-weight: 600;
  }

  .who small {
    font-size: 11px;
    line-height: 13px;
    font-weight: 400;
    color: #999ca0;
  }

  .chevron {
    width: 8px;
    height: 8px;
    margin-top: 6px;
    color: #777;
  }

  .cta {
    display: flex;
    align-items: center;
    justify-content: center;
    gap: 4px;
    width: 100%;
    height: 37px;
    margin-top: 14px;
    border: 1px solid #b9dfd0;
    border-radius: 10px;
    background: #d8eee5;
    color: #35ae84;
    font-size: 13px;
    font-weight: 700;
  }

  .cta .icon {
    width: 15px;
    height: 15px;
  }

  .cta-arrow {
    width: 12px;
    height: 12px;
  }

  .powered {
    margin-top: 9px;
    font-size: 10px;
    line-height: 14px;
    letter-spacing: 1px;
    text-align: center;
    white-space: nowrap;
    color: #888b8f;
  }

  .page {
    position: relative;
    flex: 1;
    min-width: 0;
    display: flex;
    flex-direction: column;
  }

  .topbar {
    display: flex;
    align-items: center;
    flex: none;
    height: 63px;
    padding: 0 22px;
    background: #f5f6f8;
    border-bottom: 1px solid #e4e7e8;
  }

  .crumbs {
    display: flex;
    align-items: baseline;
    gap: 8px;
    flex: 0 0 220px;
    font-size: 13px;
    color: #5b5e62;
    white-space: nowrap;
  }

  .crumbs strong {
    font-size: 15px;
    font-weight: 600;
    color: #060708;
  }

  .search {
    display: flex;
    align-items: center;
    gap: 14px;
    flex: 0 1 465px;
    height: 36px;
    padding: 0 11px;
    border: 1px solid #e6e8ea;
    border-radius: 10px;
    background: #fff;
    color: #777;
  }

  .search svg {
    width: 10px;
    height: 10px;
  }

  .search input {
    flex: 1;
    min-width: 0;
    border: 0;
    outline: 0;
    background: none;
    font: 13px Inter, sans-serif;
  }

  .search input::placeholder {
    color: #717478;
    opacity: 1;
  }

  .actions {
    display: flex;
    gap: 10px;
    margin-left: 18px;
  }

  .square {
    position: relative;
    display: grid;
    place-items: center;
    width: 39px;
    height: 39px;
    border: 1px solid #e6e8ea;
    border-radius: 10px;
    background: #fff;
  }

  .square svg {
    width: 18px;
    height: 18px;
  }

  .count {
    position: absolute;
    top: -2px;
    right: -2px;
    padding: 0 5px;
    border-radius: 6px;
    background: #ec4d69;
    color: #fff;
    font-size: 9px;
    line-height: 13px;
    font-weight: 700;
  }

  .new {
    display: flex;
    align-items: center;
    justify-content: center;
    gap: 7px;
    width: 80px;
    height: 39px;
    border: 1px solid #2fa27b;
    border-radius: 10px;
    background: #0cba83;
    box-shadow: 0 0 12px #bdebd9;
    font-size: 13px;
    font-weight: 700;
  }

  .new svg {
    width: 10px;
    height: 10px;
  }

  main {
    flex: 1;
    min-height: 0;
    overflow: hidden;
    padding: 27px 39px 0 28px;
  }

  .cards {
    display: grid;
    grid-template-columns: repeat(5, minmax(0, 1fr));
    gap: 14px;
  }

  .card {
    padding: 18px 18px 17px 19px;
    border: 1px solid #e8eaec;
    border-radius: 16px;
    background: #fff;
  }

  .card-top {
    display: flex;
    align-items: center;
    justify-content: space-between;
  }

  h3 {
    font-size: 11px;
    font-weight: 400;
    letter-spacing: 0.05em;
    text-transform: uppercase;
    color: #55585c;
  }

  .tile {
    display: grid;
    place-items: center;
    width: 33px;
    height: 33px;
    border: 1px solid #e0e3e6;
    border-radius: 8px;
    background: #f2f3f5;
    color: #55585c;
  }

  .value {
    margin: 11px 0 4px;
    font-size: 26px;
    line-height: 32px;
    font-weight: 700;
    letter-spacing: -1px;
  }

  .good {
    color: #2cb184;
  }

  .bad {
    color: #ea4a68;
  }

  .card p {
    font-size: 11px;
    line-height: 16px;
    letter-spacing: 0.03em;
    white-space: nowrap;
    color: #909397;
  }

  .panel {
    margin-top: 27px;
    border: 1px solid #e4e6e9;
    border-radius: 16px 16px 0 0;
    background: #fff;
    overflow: hidden;
  }

  .panel-head {
    display: flex;
    align-items: center;
    justify-content: space-between;
    height: 66px;
    padding: 0 17px 0 19px;
    border-bottom: 1px solid #e4e6e9;
  }

  .panel-text {
    padding-top: 5px;
  }

  .panel-title {
    display: flex;
    align-items: center;
    height: 22px;
  }

  .panel-title h2 {
    font-size: 15px;
    font-weight: 700;
  }

  .panel-head p {
    font-size: 12px;
    line-height: 18px;
    color: #666a6e;
    white-space: nowrap;
  }

  .live {
    display: flex;
    align-items: center;
    gap: 5px;
    margin-left: 11px;
    padding: 0 9px;
    border: 1px solid #dcebaf;
    border-radius: 9px;
    background: #f5fae6;
    color: #bdd670;
    font-size: 10px;
    line-height: 16px;
    font-weight: 700;
    letter-spacing: 1px;
  }

  .live i {
    width: 6px;
    height: 6px;
    border-radius: 2px;
    background: #c8df80;
  }

  .pills {
    display: flex;
    align-items: center;
    gap: 6px;
    padding-bottom: 5px;
  }

  .pill {
    display: flex;
    align-items: center;
    justify-content: center;
    min-width: 38px;
    height: 26px;
    padding: 0 11px;
    border: 1px solid #dcdfe1;
    border-radius: 13px;
    background: #fff;
    font-size: 12px;
    font-weight: 600;
  }

  .pill i {
    width: 8px;
    height: 8px;
    margin-right: 6px;
    border-radius: 4px;
    background: #d5d8da;
  }

  .pill.on {
    border-color: #d6e7a5;
    background: #f7fbea;
  }

  .pill.on i {
    background: #bdd84f;
    box-shadow: 0 0 4px #d5e892;
  }

  .pill .globe {
    width: 15px;
    height: 15px;
  }

  .pill.lime {
    gap: 4px;
    border-color: #d6e7a5;
    color: #bad75c;
  }

  .lime svg {
    width: 8px;
    height: 8px;
  }

  .map {
    display: block;
    width: 100%;
  }

  .sphere {
    fill: #0a1220;
    stroke: #17323f;
  }

  .land {
    fill: #1b2832;
  }

  .water {
    fill: #0a1220;
  }

  .border {
    fill: none;
    stroke: #111d28;
    stroke-width: 0.6;
  }

  .graticule {
    fill: none;
    stroke: #7094a5;
    stroke-opacity: 0.09;
    stroke-width: 0.8;
  }

  .market {
    fill: #cbe052;
  }

  .flow {
    fill: none;
    stroke: #67c5bd;
    stroke-width: 1.5;
    stroke-dasharray: 6 6;
  }

  .halo {
    fill: #b3c4bb;
    fill-opacity: 0.6;
  }

  .client {
    fill: #3fb4e6;
    stroke: #28c3a8;
  }

  .deal {
    fill: #f0607e;
    stroke: #b3606f;
  }

  .names {
    font-size: 9px;
    font-weight: 600;
    letter-spacing: 1px;
    text-anchor: middle;
    fill: #dcdedd;
    stroke: #0a1320;
    stroke-width: 2px;
    paint-order: stroke;
  }

  .names .hub {
    fill: #cbe052;
  }

  .page-thumb {
    position: absolute;
    right: 2px;
    top: 65px;
    width: 6px;
    height: 243px;
    border-radius: 3px;
    background: #d9dbde;
  }

  .widget {
    position: absolute;
    z-index: 3;
    right: 0;
    top: 247px;
    display: grid;
    place-items: center;
    width: 40px;
    height: 48px;
    border: 0;
    border-radius: 8px 0 0 8px;
    background: #40413d;
    box-shadow: 0 2px 8px #0003;
  }

  .widget svg {
    width: 28px;
    height: 28px;
  }
</style>
